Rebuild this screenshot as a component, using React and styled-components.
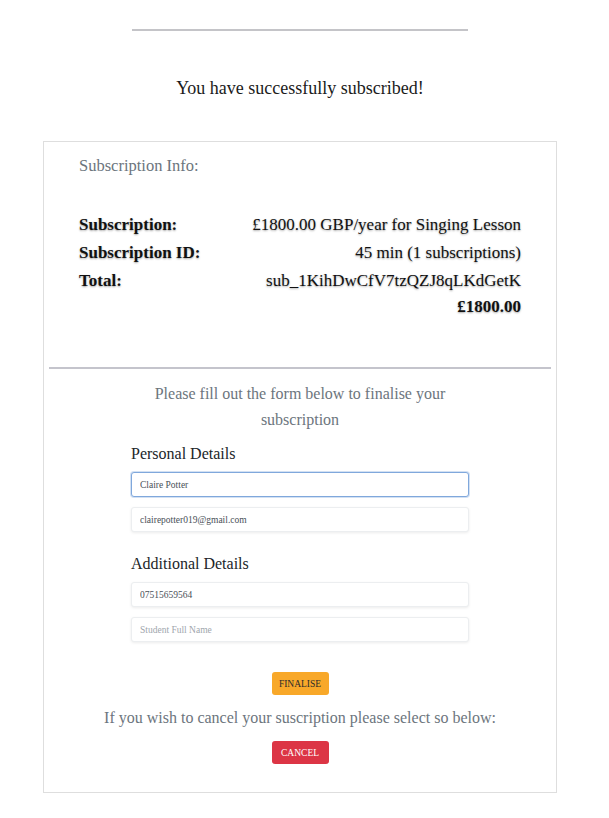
import React from "react";
import styled, { createGlobalStyle } from "styled-components";

const GlobalStyle = createGlobalStyle`
  body {
    margin: 0;
    background: #fff;
    font-family: "Liberation Serif", "Times New Roman", serif;
    color: #212529;
  }
`;

const Page = styled.div`
  width: 600px;
  display: flex;
  flex-direction: column;
  align-items: center;
  padding-top: 29px;
`;

const TopRule = styled.hr`
  width: 336px;
  margin: 0;
  border: 0;
  border-top: 2px solid #c4c4c8;
`;

const Heading = styled.h2`
  margin: 45px 0 0;
  font-size: 18px;
  font-weight: 400;
  line-height: 24px;
  color: #1b1b1b;
`;

const Card = styled.div`
  width: 514px;
  box-sizing: border-box;
  margin: 41px 0 26px;
  border: 1px solid #dedede;
  padding: 12px 5px 28px;
`;

const InfoSection = styled.div`
  padding: 0 30px 0 30px;
`;

const InfoTitle = styled.p`
  margin: 0;
  font-size: 16.5px;
  line-height: 24px;
  color: #6c757d;
`;

const InfoGrid = styled.div`
  display: grid;
  grid-template-columns: 1fr auto;
  margin-top: 33px;
  padding-bottom: 46px;
  font-size: 17px;
  line-height: 28px;
  color: #111;
  text-shadow: 0 1px 2px rgba(0, 0, 0, 0.35);
`;

const Labels = styled.div`
  display: flex;
  flex-direction: column;
  font-weight: 700;
`;

const Values = styled.div`
  display: flex;
  flex-direction: column;
  align-items: flex-end;
  text-align: right;
`;

const Value = styled.span`
  font-weight: ${(p) => (p.$bold ? 700 : 400)};
  margin-top: ${(p) => (p.$bold ? -2 : 0)}px;
`;

const Divider = styled.hr`
  margin: 0;
  border: 0;
  border-top: 2px solid #c4c4cc;
`;

const FormSection = styled.form`
  display: flex;
  flex-direction: column;
  align-items: center;
  padding-top: 12px;
`;

const Intro = styled.p`
  margin: 0;
  width: 300px;
  text-align: center;
  font-size: 16px;
  line-height: 26px;
  color: #6c757d;
`;

const FieldGroup = styled.div`
  width: 338px;
  display: flex;
  flex-direction: column;
  gap: 10px;
  margin-top: ${(p) => p.$top}px;
`;

const GroupTitle = styled.h5`
  margin: 0 0 -3px;
  font-size: 16px;
  font-weight: 400;
  line-height: 22px;
  color: #212529;
`;

const Input = styled.input`
  box-sizing: border-box;
  width: 100%;
  height: 25px;
  padding: 0 8px;
  font-family: "Liberation Serif", "Times New Roman", serif;
  font-size: 9.5px;
  color: #495057;
  background: #fff;
  border: 1px solid ${(p) => (p.$focused ? "#80a8dc" : "#eceef0")};
  border-radius: 3px;
  box-shadow: ${(p) =>
    p.$focused
      ? "0 0 0 1px rgba(128, 168, 220, 0.35)"
      : "0 1px 3px rgba(0, 0, 0, 0.08)"};
  outline: none;

  &::placeholder {
    color: #a0a6ad;
  }
`;

const Button = styled.button`
  height: 23px;
  width: 57px;
  border: 0;
  border-radius: 3px;
  font-family: "Liberation Serif", "Times New Roman", serif;
  font-size: 9.5px;
  text-transform: uppercase;
  cursor: pointer;
  background: ${(p) => (p.$variant === "danger" ? "#dc3545" : "#f8a829")};
  color: ${(p) => (p.$variant === "danger" ? "#fff" : "#2b2b2b")};
  margin-top: ${(p) => p.$top}px;
`;

const CancelNote = styled.p`
  margin: 12px 0 0;
  font-size: 16px;
  line-height: 22px;
  color: #6c757d;
`;

export default function App() {
  return (
    <>
      <GlobalStyle />
      <Page>
        <TopRule />
        <Heading>You have successfully subscribed!</Heading>
        <Card>
          <InfoSection>
            <InfoTitle>Subscription Info:</InfoTitle>
            <InfoGrid>
              <Labels>
                <span>Subscription:</span>
                <span>Subscription ID:</span>
                <span>Total:</span>
              </Labels>
              <Values>
                <Value>£1800.00 GBP/year for Singing Lesson</Value>
                <Value>45 min (1 subscriptions)</Value>
                <Value>sub_1KihDwCfV7tzQZJ8qLKdGetK</Value>
                <Value $bold>£1800.00</Value>
              </Values>
            </InfoGrid>
          </InfoSection>
          <Divider />
          <FormSection onSubmit={(e) => e.preventDefault()}>
            <Intro>
              Please fill out the form below to finalise your subscription
            </Intro>
            <FieldGroup $top={10}>
              <GroupTitle>Personal Details</GroupTitle>
              <Input $focused defaultValue="Claire Potter" />
              <Input defaultValue="clairepotter019@gmail.com" />
            </FieldGroup>
            <FieldGroup $top={21}>
              <GroupTitle>Additional Details</GroupTitle>
              <Input defaultValue="07515659564" />
              <Input placeholder="Student Full Name" />
            </FieldGroup>
            <Button type="submit" $top={30}>
              Finalise
            </Button>
            <CancelNote>
              If you wish to cancel your suscription please select so below:
            </CancelNote>
            <Button type="button" $variant="danger" $top={12}>
              Cancel
            </Button>
          </FormSection>
        </Card>
      </Page>
    </>
  );
}
